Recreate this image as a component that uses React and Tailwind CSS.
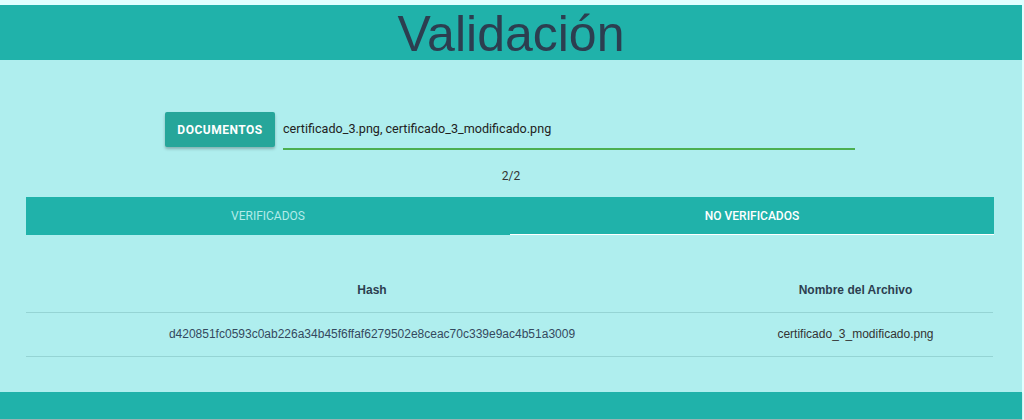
export default function App() {
  const rows = [
    {
      hash: "d420851fc0593c0ab226a34b45f6ffaf6279502e8ceac70c339e9ac4b51a3009",
      name: "certificado_3_modificado.png",
    },
  ];

  return (
    <div className="h-[420px] bg-[#e0ffff] pt-[5px] pr-[2px] overflow-hidden">
      <div className="bg-[#afeeee]">
        {/* Header */}
        <header className="h-[55px] bg-[#20b2aa] flex items-center justify-center">
          <h1 className="text-[50px] leading-none text-[#2c3e50] font-['Liberation_Sans',Arial,sans-serif] pt-[2px]">
            Validación
          </h1>
        </header>

        <main className="pt-[52px] font-['Roboto',sans-serif]">
          {/* File input */}
          <div className="flex items-start pl-[165px] gap-[8px]">
            <button className="w-[110px] h-[35px] bg-[#26a69a] text-white text-[12px] font-bold tracking-[0.5px] rounded-[2px] shadow-[0_2px_3px_rgba(0,0,0,0.25)]">
              DOCUMENTOS
            </button>
            <div className="w-[572px] h-[38px] border-b-2 border-[#4caf50] flex items-center">
              <span className="text-[12.6px] text-[#222] pb-[1px]">
                certificado_3.png, certificado_3_modificado.png
              </span>
            </div>
          </div>

          <p className="mt-[18px] text-center text-[12px] leading-[16px] text-[#333]">2/2</p>

          {/* Tabs */}
          <div className="mt-[13px] ml-[26px] w-[968px] flex">
            <div className="flex-1 h-[38px] bg-[#20b2aa] flex items-center justify-center text-[12px] text-[#b2ece9]">
              VERIFICADOS
            </div>
            <div className="flex-1 h-[38px] bg-[#20b2aa] border-b border-white flex items-center justify-center text-[12px] text-white font-medium">
              NO VERIFICADOS
            </div>
          </div>

          {/* Table */}
          <table className="mt-[34px] ml-[26px] w-[967px] border-collapse font-['Liberation_Sans',Arial,sans-serif] text-[12px] leading-[13px]">
            <thead>
              <tr className="border-b border-[#95d4d4]">
                <th className="py-[15px] px-[5px] font-bold text-[#2c3e50]">Hash</th>
                <th className="py-[15px] px-[5px] font-bold text-[#2c3e50] w-[275px]">Nombre del Archivo</th>
              </tr>
            </thead>
            <tbody>
              {rows.map((r) => (
                <tr key={r.hash} className="border-b border-[#95d4d4]">
                  <td className="py-[15px] px-[5px] text-center text-[#34495e]">{r.hash}</td>
                  <td className="py-[15px] px-[5px] text-center text-[#333]">{r.name}</td>
                </tr>
              ))}
            </tbody>
          </table>
        </main>

        {/* Footer */}
        <footer className="mt-[35px] h-[27px] bg-[#20b2aa] shadow-[0_1px_1px_rgba(0,0,0,0.3)]" />
      </div>
    </div>
  );
}
